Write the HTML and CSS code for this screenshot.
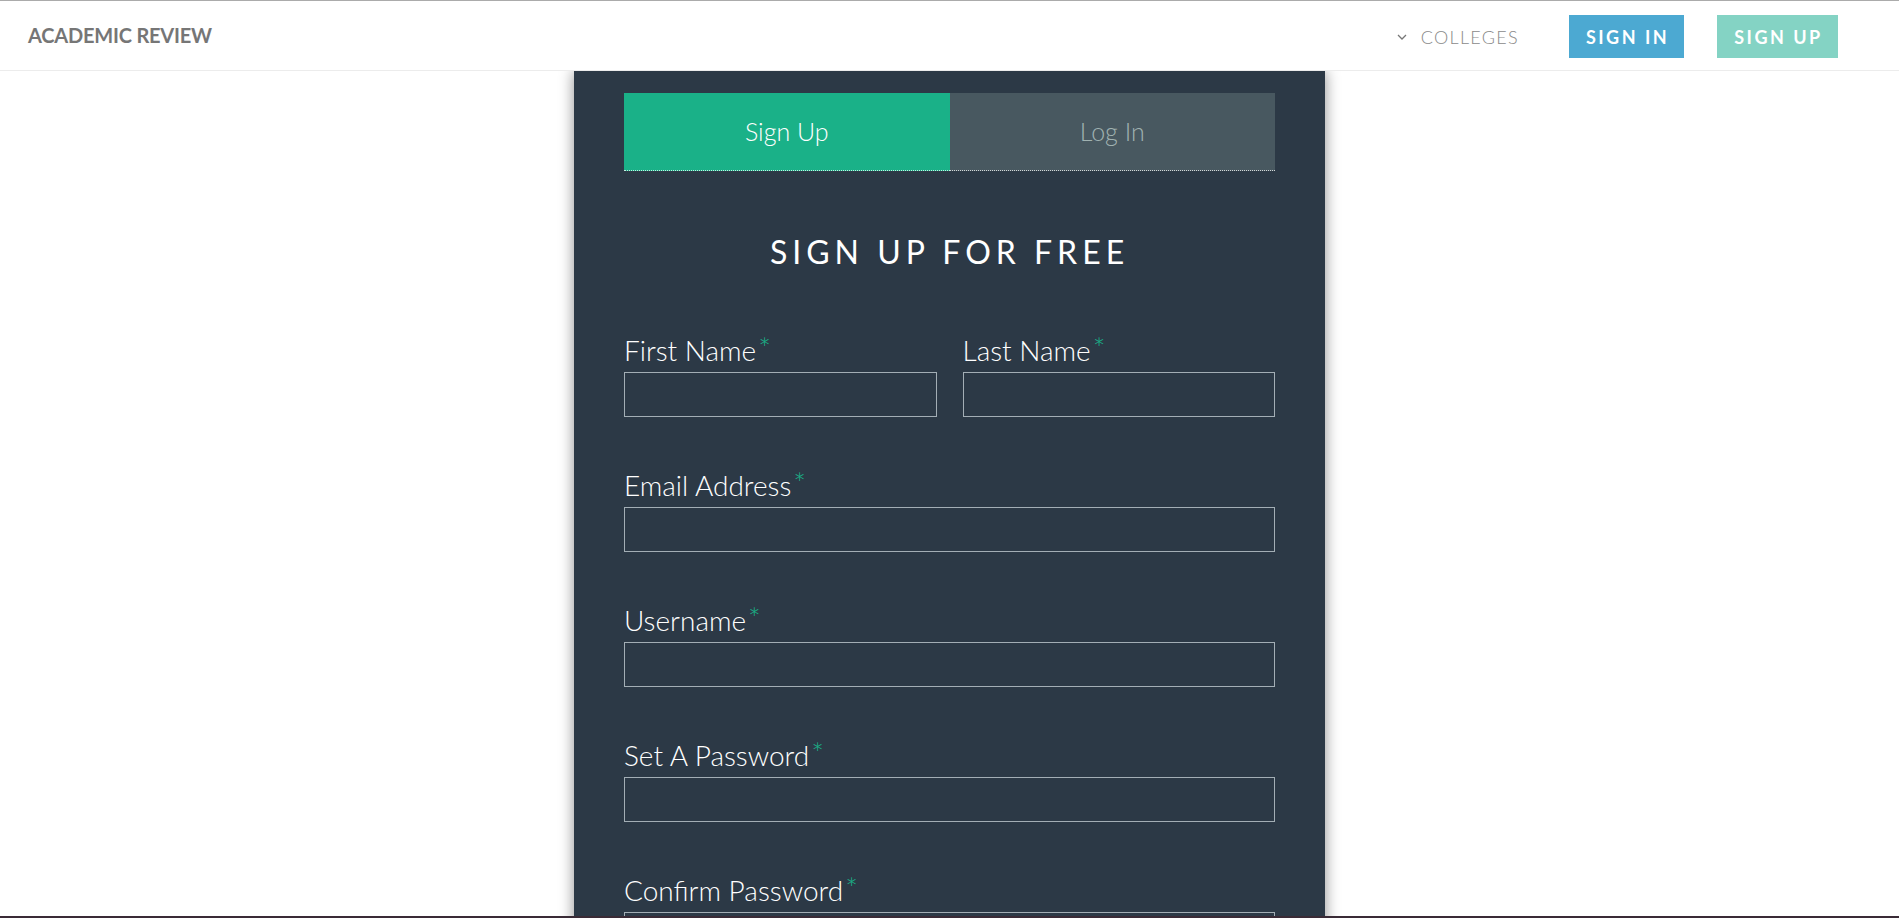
FILE: index.html
```html
<!DOCTYPE html>
<html lang="en">
<head>
<meta charset="utf-8">
<title>Academic Review - Sign Up</title>
<link rel="stylesheet" href="styles.css">
</head>
<body>
<header class="topbar">
  <a class="brand" href="#">ACADEMIC REVIEW</a>
  <nav class="nav">
    <a class="nav-drop" href="#">
      <svg class="chev" width="10" height="6" viewBox="0 0 10 6"><path d="M1 1 L5 5 L9 1" fill="none" stroke="#777" stroke-width="1.3"/></svg>
      <span>COLLEGES</span>
    </a>
    <a class="btn btn-in" href="#">SIGN IN</a>
    <a class="btn btn-up" href="#">SIGN UP</a>
  </nav>
</header>
<main class="page">
  <section class="card">
    <div class="tabs">
      <a class="tab tab-active" href="#">Sign Up</a>
      <a class="tab" href="#">Log In</a>
    </div>
    <h1 class="title">SIGN UP FOR FREE</h1>
    <form class="form">
      <div class="row">
        <div class="field">
          <label class="label">First Name<span class="req">*</span></label>
          <input class="input" type="text">
        </div>
        <div class="field">
          <label class="label">Last Name<span class="req">*</span></label>
          <input class="input" type="text">
        </div>
      </div>
      <div class="field">
        <label class="label">Email Address<span class="req">*</span></label>
        <input class="input" type="email">
      </div>
      <div class="field">
        <label class="label">Username<span class="req">*</span></label>
        <input class="input" type="text">
      </div>
      <div class="field">
        <label class="label">Set A Password<span class="req">*</span></label>
        <input class="input" type="password">
      </div>
      <div class="field">
        <label class="label">Confirm Password<span class="req">*</span></label>
        <input class="input" type="password">
      </div>
    </form>
  </section>
</main>
<div class="screen-edge"></div>
</body>
</html>
```
FILE: styles.css
```css
* { box-sizing: border-box; }
html, body { margin: 0; padding: 0; }
body {
  background: #fff;
  font-family: Lato, "Open Sans", sans-serif;
  overflow: hidden;
}
a { text-decoration: none; }

.topbar {
  height: 71px;
  border-top: 1px solid #ababab;
  border-bottom: 1px solid #ececec;
  display: flex;
  align-items: center;
  justify-content: space-between;
  padding: 2px 61px 0 28px;
  background: #fff;
  position: relative;
  z-index: 2;
}
.brand {
  font-weight: 700;
  font-size: 20px;
  color: #767676;
  letter-spacing: -0.2px;
  margin-top: -3px;
}
.nav {
  display: flex;
  align-items: center;
}
.nav-drop {
  display: flex;
  align-items: center;
  color: #8a8a8a;
  font-weight: 300;
  font-size: 18px;
  letter-spacing: 1.3px;
  margin-right: 50px;
}
.chev { margin-right: 14px; margin-top: 1px; }
.btn {
  display: flex;
  align-items: center;
  justify-content: center;
  height: 43px;
  color: #fff;
  font-weight: 700;
  font-size: 18px;
  letter-spacing: 2.5px;
  padding-left: 2px;
}
.btn-in { width: 115px; background: #4ca9d2; margin-right: 33px; }
.btn-up { width: 121px; background: #84d3c4; }

.page {
  display: flex;
  justify-content: center;
}
.card {
  width: 751px;
  min-height: 900px;
  background: #2c3946;
  padding: 22px 50px 40px;
  box-shadow: 0 0 14px rgba(0, 0, 0, 0.45);
}
.tabs {
  display: grid;
  grid-template-columns: 1fr 1fr;
}
.tab {
  height: 78px;
  display: flex;
  align-items: center;
  justify-content: center;
  font-size: 25px;
  font-weight: 300;
  background: #485860;
  color: #a0b2b1;
  border-bottom: 1px dotted rgba(255, 255, 255, 0.75);
  padding-bottom: 2px;
}
.tab-active { background: #1ab188; color: #fff; }

.title {
  margin: 61px 0 64px;
  text-align: center;
  color: #fff;
  font-weight: 400;
  font-size: 32px;
  line-height: 40px;
  letter-spacing: 5px;
}
.form { display: flex; flex-direction: column; }
.row {
  display: grid;
  grid-template-columns: 1fr 1fr;
  column-gap: 26px;
}
.field {
  display: flex;
  flex-direction: column;
  margin-bottom: 54px;
}
.label {
  color: #fff;
  font-weight: 300;
  font-size: 28px;
  line-height: 28px;
  height: 28px;
  margin-bottom: 8px;
  white-space: nowrap;
}
.req {
  color: #1ab188;
  font-size: 30px;
  line-height: 20px;
  vertical-align: 2px;
  margin-left: 2px;
}
.input {
  height: 45px;
  background: transparent;
  border: 1px solid #a3aeb5;
  border-radius: 0;
  outline: none;
  color: #fff;
  font-family: inherit;
  font-size: 20px;
  padding: 0 10px;
}

.screen-edge {
  position: fixed;
  left: 0;
  right: 0;
  bottom: 0;
  height: 2px;
  background: #3a2b36;
  z-index: 5;
}
```
